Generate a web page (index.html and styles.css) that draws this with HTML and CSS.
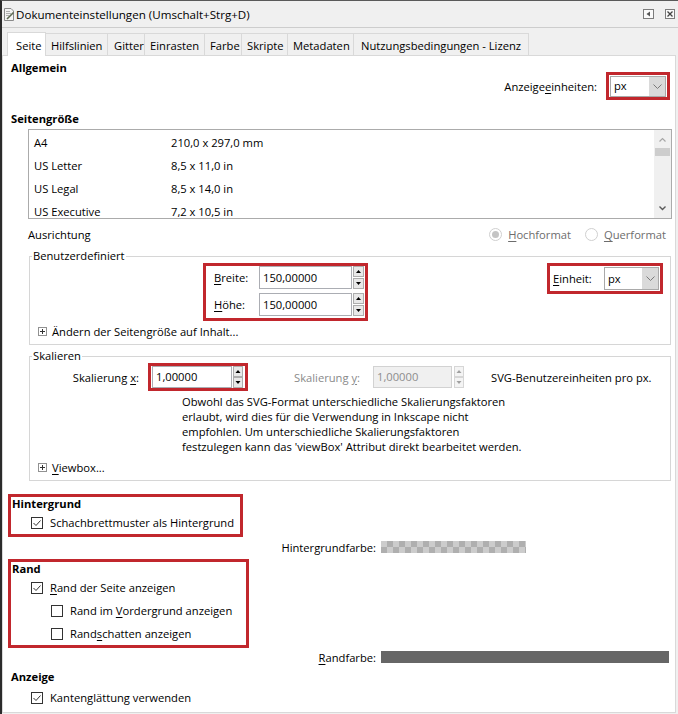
FILE: index.html
```html
<!DOCTYPE html>
<html lang="de">
<head>
    <meta charset="UTF-8">
    <title>Dokumenteinstellungen</title>
    <link rel="stylesheet" href="styles.css">
</head>
<body>
<div class="window">
    <!-- Title bar -->
    <div class="titlebar">
        <svg class="app-icon" width="12" height="13" viewBox="0 0 12 13">
            <path d="M1.5 0.5 H8 L10.5 3 V12.5 H1.5 Z" fill="#f4f4f4" stroke="#8a8a8a"/>
            <path d="M3 3.5 H7 M3 5.5 H8 M3 7.5 H6" stroke="#b0b0b0"/>
            <path d="M4 11 L10.5 4.5" stroke="#5d6b52" stroke-width="1.6"/>
        </svg>
        <span class="title">Dokumenteinstellungen (Umschalt+Strg+D)</span>
        <span class="title-btns">
            <svg width="11" height="10" viewBox="0 0 11 10">
                <rect x="0.5" y="0.5" width="10" height="9" fill="#fafafa" stroke="#7c7c7c"/>
                <path d="M3.5 5 L7 2.5 V7.5 Z" fill="#555"/>
            </svg>
            <svg width="10" height="10" viewBox="0 0 10 10">
                <rect x="0.5" y="0.5" width="9" height="9" fill="#fafafa" stroke="#7c7c7c"/>
                <path d="M2.5 2.5 L7.5 7.5 M7.5 2.5 L2.5 7.5" stroke="#444" stroke-width="1.3"/>
            </svg>
        </span>
    </div>

    <!-- Tabs -->
    <div class="tabs">
        <div class="tab active tab-seite">Seite</div>
        <div class="tab tab-hilfs">Hilfslinien</div>
        <div class="tab tab-gitter">Gitter</div>
        <div class="tab tab-einrasten">Einrasten</div>
        <div class="tab tab-farbe">Farbe</div>
        <div class="tab tab-skripte">Skripte</div>
        <div class="tab tab-meta">Metadaten</div>
        <div class="tab tab-lizenz">Nutzungsbedingungen - Lizenz</div>
    </div>

    <div class="panel">
        <!-- Allgemein -->
        <div class="general">
            <div class="heading">Allgemein</div>
            <div class="units">
                <label>Anzeige<u>e</u>inheiten:</label>
                <div class="hl units-box">
                    <div class="select">
                        <span class="val">px</span>
                        <span class="arrow">
                            <svg width="9" height="6" viewBox="0 0 9 6"><path d="M0.5 0.5 L4.5 4.5 L8.5 0.5" fill="none" stroke="#7a7a7a"/></svg>
                        </span>
                    </div>
                </div>
            </div>
        </div>

        <!-- Seitengröße -->
        <div class="heading heading-size">Seitengröße</div>
        <div class="sizes">
            <div class="rows">
                <div class="size-row"><span class="name">A4</span><span>210,0 x 297,0 mm</span></div>
                <div class="size-row"><span class="name">US Letter</span><span>8,5 x 11,0 in</span></div>
                <div class="size-row"><span class="name">US Legal</span><span>8,5 x 14,0 in</span></div>
                <div class="size-row"><span class="name">US Executive</span><span>7,2 x 10,5 in</span></div>
            </div>
            <svg class="scrollbar" width="17" height="88" viewBox="0 0 17 88">
                <rect width="17" height="88" fill="#f0f0f0"/>
                <path d="M5.5 11.5 L8.5 8.5 L11.5 11.5" fill="none" stroke="#a6a6a6" stroke-width="1.2"/>
                <rect x="1" y="18" width="15" height="8" fill="#cdcdcd"/>
                <path d="M5.5 76.5 L8.5 79.5 L11.5 76.5" fill="none" stroke="#5a5a5a" stroke-width="1.4"/>
            </svg>
        </div>

        <div class="orient">
            <span>Ausrichtung</span>
            <span class="radios">
                <span class="radio">
                    <svg width="13" height="13" viewBox="0 0 13 13">
                        <circle cx="6.5" cy="6.5" r="6" fill="#fff" stroke="#cfcfcf"/>
                        <circle cx="6.5" cy="6.5" r="3.5" fill="#c4c4c4"/>
                    </svg>
                    <span><u>H</u>ochformat</span>
                </span>
                <span class="radio">
                    <svg width="13" height="13" viewBox="0 0 13 13">
                        <circle cx="6.5" cy="6.5" r="6" fill="#fff" stroke="#cfcfcf"/>
                    </svg>
                    <span><u>Q</u>uerformat</span>
                </span>
            </span>
        </div>

        <!-- Benutzerdefiniert -->
        <fieldset class="group group-custom">
            <legend>Benutzerdefiniert</legend>
            <div class="dims">
                <div class="hl dims-box">
                    <div class="spin-row">
                        <label class="dim-label"><u>B</u>reite:</label>
                        <div class="input">150,00000</div>
                        <svg class="spinner" width="11" height="23" viewBox="0 0 11 23">
                            <rect x="0.5" y="0.5" width="10" height="10" fill="#e8e8e8" stroke="#adadad"/>
                            <rect x="0.5" y="12.5" width="10" height="10" fill="#e8e8e8" stroke="#adadad"/>
                            <path d="M3 7 H8 L5.5 4 Z" fill="#000"/>
                            <path d="M3 16 H8 L5.5 19 Z" fill="#000"/>
                        </svg>
                    </div>
                    <div class="spin-row">
                        <label class="dim-label"><u>H</u>öhe:</label>
                        <div class="input">150,00000</div>
                        <svg class="spinner" width="11" height="23" viewBox="0 0 11 23">
                            <rect x="0.5" y="0.5" width="10" height="10" fill="#e8e8e8" stroke="#adadad"/>
                            <rect x="0.5" y="12.5" width="10" height="10" fill="#e8e8e8" stroke="#adadad"/>
                            <path d="M3 7 H8 L5.5 4 Z" fill="#000"/>
                            <path d="M3 16 H8 L5.5 19 Z" fill="#000"/>
                        </svg>
                    </div>
                </div>
                <div class="hl unit-box">
                    <label class="unit-label"><u>E</u>inheit:</label>
                    <div class="select select-unit">
                        <span class="val">px</span>
                        <span class="arrow">
                            <svg width="9" height="6" viewBox="0 0 9 6"><path d="M0.5 0.5 L4.5 4.5 L8.5 0.5" fill="none" stroke="#7a7a7a"/></svg>
                        </span>
                    </div>
                </div>
            </div>
            <div class="expander">
                <svg width="9" height="9" viewBox="0 0 9 9">
                    <rect x="0.5" y="0.5" width="8" height="8" fill="#fff" stroke="#919191"/>
                    <path d="M2 4.5 H7 M4.5 2 V7" stroke="#333"/>
                </svg>
                <span>Ändern der Seitengröße auf Inhalt...</span>
            </div>
        </fieldset>

        <!-- Skalieren -->
        <fieldset class="group group-scale">
            <legend>Skalieren</legend>
            <div class="scale-row">
                <label class="lbl-x">Skalierung <u>x</u>:</label>
                <div class="hl scale-box">
                    <div class="input input-scale">1,00000</div>
                    <svg class="spinner" width="10" height="22" viewBox="0 0 10 22">
                        <rect x="0.5" y="0.5" width="9" height="10" fill="#e8e8e8" stroke="#adadad"/>
                        <rect x="0.5" y="11.5" width="9" height="10" fill="#e8e8e8" stroke="#adadad"/>
                        <path d="M2.5 7 H7.5 L5 4 Z" fill="#000"/>
                        <path d="M2.5 15 H7.5 L5 18 Z" fill="#000"/>
                    </svg>
                </div>
                <label class="lbl-y">Skalierung <u>y</u>:</label>
                <div class="input input-disabled">1,00000</div>
                <svg class="spinner spinner-y" width="10" height="22" viewBox="0 0 10 22">
                    <rect x="0.5" y="0.5" width="9" height="10" fill="#f4f4f4" stroke="#d6d6d6"/>
                    <rect x="0.5" y="11.5" width="9" height="10" fill="#f4f4f4" stroke="#d6d6d6"/>
                    <path d="M2.5 7 H7.5 L5 4 Z" fill="#a0a0a0"/>
                    <path d="M2.5 15 H7.5 L5 18 Z" fill="#a0a0a0"/>
                </svg>
                <span class="svg-units">SVG-Benutzereinheiten pro px.</span>
            </div>
            <p class="note">Obwohl das SVG-Format unterschiedliche Skalierungsfaktoren<br>erlaubt, wird dies für die Verwendung in Inkscape nicht<br>empfohlen. Um unterschiedliche Skalierungsfaktoren<br>festzulegen kann das 'viewBox' Attribut direkt bearbeitet werden.</p>
            <div class="expander">
                <svg width="9" height="9" viewBox="0 0 9 9">
                    <rect x="0.5" y="0.5" width="8" height="8" fill="#fff" stroke="#919191"/>
                    <path d="M2 4.5 H7 M4.5 2 V7" stroke="#333"/>
                </svg>
                <span><u>V</u>iewbox...</span>
            </div>
        </fieldset>

        <!-- Hintergrund -->
        <div class="hl box-bg">
            <div class="heading">Hintergrund</div>
            <div class="check-row">
                <svg class="check" width="12" height="12" viewBox="0 0 12 12">
                    <rect x="0.5" y="0.5" width="11" height="11" fill="#fff" stroke="#333"/>
                    <path d="M2.5 6 L5 8.5 L9.5 3.5" fill="none" stroke="#333"/>
                </svg>
                <span>Schachbrettmuster als Hintergrund</span>
            </div>
        </div>
        <div class="color-row">
            <span class="color-label">Hintergrundfarbe:</span>
            <span class="swatch swatch-checker"></span>
        </div>

        <!-- Rand -->
        <div class="hl box-border">
            <div class="heading">Rand</div>
            <div class="check-row">
                <svg class="check" width="12" height="12" viewBox="0 0 12 12">
                    <rect x="0.5" y="0.5" width="11" height="11" fill="#fff" stroke="#333"/>
                    <path d="M2.5 6 L5 8.5 L9.5 3.5" fill="none" stroke="#333"/>
                </svg>
                <span><u>R</u>and der Seite anzeigen</span>
            </div>
            <div class="check-row sub">
                <svg class="check" width="12" height="12" viewBox="0 0 12 12">
                    <rect x="0.5" y="0.5" width="11" height="11" fill="#fff" stroke="#333"/>
                </svg>
                <span>Rand im <u>V</u>ordergrund anzeigen</span>
            </div>
            <div class="check-row sub">
                <svg class="check" width="12" height="12" viewBox="0 0 12 12">
                    <rect x="0.5" y="0.5" width="11" height="11" fill="#fff" stroke="#333"/>
                </svg>
                <span>Rand<u>s</u>chatten anzeigen</span>
            </div>
        </div>
        <div class="color-row color-row-border">
            <span class="color-label"><u>R</u>andfarbe:</span>
            <span class="swatch swatch-grey"></span>
        </div>

        <!-- Anzeige -->
        <div class="heading heading-display">Anzeige</div>
        <div class="check-row plain">
            <svg class="check" width="12" height="12" viewBox="0 0 12 12">
                <rect x="0.5" y="0.5" width="11" height="11" fill="#fff" stroke="#333"/>
                <path d="M2.5 6 L5 8.5 L9.5 3.5" fill="none" stroke="#333"/>
            </svg>
            <span>Kantenglättung verwenden</span>
        </div>
    </div>
</div>
</body>
</html>
```

FILE: styles.css
```css
* {
    box-sizing: border-box;
}
body {
    margin: 0;
    width: 678px;
    height: 714px;
    overflow: hidden;
    background: #e4e4e4;
    font-family: "Open Sans", "Noto Sans", sans-serif;
    font-size: 11.2px;
    color: #000;
}
u {
    text-decoration-thickness: 1px;
    text-underline-offset: 2px;
}
.window {
    height: 714px;
    border-top: 1px solid #5a5a5a;
    border-left: 2px solid #2b2b2b;
    background: #f0f0f0;
    display: flex;
    flex-direction: column;
}

/* title bar */
.titlebar {
    flex: none;
    height: 27px;
    border-bottom: 1px solid #cdcdcd;
    display: flex;
    align-items: center;
    padding: 1px 3px 0 1px;
    font-size: 11.6px;
}
.app-icon {
    margin-right: 1px;
}
.title-btns {
    margin-left: auto;
    display: flex;
    gap: 11px;
    margin-top: -2px;
}

/* tabs */
.tabs {
    flex: none;
    height: 27px;
    display: flex;
    align-items: flex-end;
    padding-left: 5px;
}
.tab {
    height: 22px;
    padding: 4px 0 0 5px;
    line-height: 15px;
    border: 1px solid #d9d9d9;
    border-bottom: none;
    margin-right: -1px;
    background: #f0f0f0;
    white-space: nowrap;
    overflow: hidden;
}
.tab.active {
    height: 24px;
    margin-bottom: -1px;
    padding: 5px 0 0 8px;
    background: #fff;
    position: relative;
    z-index: 1;
}
.tab-seite { width: 39px; }
.tab-hilfs { width: 63px; }
.tab-gitter { width: 38px; padding-left: 6px; }
.tab-einrasten { width: 61px; }
.tab-farbe { width: 38px; }
.tab-skripte { width: 47px; }
.tab-meta { width: 67px; }
.tab-lizenz { width: 176px; padding-left: 7px; }

/* page panel */
.panel {
    flex: none;
    height: 658px;
    margin-right: 2px;
    border: 1px solid #d9d9d9;
    background: #fff;
    padding: 5px 3px 0 8px;
    overflow: hidden;
}
.heading {
    font-weight: bold;
    line-height: 14px;
}
.general {
    display: flex;
    justify-content: space-between;
    align-items: flex-start;
}
.units {
    display: flex;
    align-items: center;
    margin-top: 11px;
    margin-right: 2px;
}
.units label {
    margin-right: 9px;
}
.hl {
    border: 3px solid #c1272d;
}
.units-box {
    padding: 1px 1px 0 1px;
}
.select {
    display: flex;
    width: 56px;
    height: 21px;
    border: 1px solid #a9a9a9;
    background: #fff;
}
.select .val {
    flex: 1;
    padding-left: 3px;
    line-height: 18px;
}
.select .arrow {
    width: 16px;
    background: #dadada;
    display: flex;
    align-items: center;
    justify-content: center;
}

/* page sizes */
.heading-size {
    margin-top: 12px;
}
.sizes {
    margin: 3px 0 0 17px;
    height: 90px;
    border: 1px solid #ababab;
    display: flex;
    overflow: hidden;
}
.sizes .rows {
    flex: 1;
    padding-top: 1px;
}
.size-row {
    height: 23px;
    line-height: 23px;
    padding-left: 5px;
    display: flex;
}
.size-row .name {
    width: 137px;
}
.scrollbar {
    flex: none;
}
.orient {
    margin: 7px 0 0 17px;
    height: 16px;
    padding-right: 6px;
    display: flex;
    justify-content: space-between;
    align-items: center;
}
.radios {
    display: flex;
    gap: 14px;
    color: #6d6d6d;
}
.radio {
    display: flex;
    align-items: center;
    gap: 6px;
}

/* frames */
.group {
    margin: 7px 1px 0 18px;
    padding: 0 0 5px 0;
    border: 1px solid #d6d6d6;
    min-width: 0;
}
.group legend {
    padding: 0 1px;
    margin-left: 2px;
    line-height: 14px;
}
.group-scale {
    margin-top: 4px;
}
.dims {
    display: flex;
    justify-content: space-between;
    align-items: flex-start;
    padding: 0 7px 0 173px;
}
.dims-box {
    padding: 0 1px 2px 8px;
}
.spin-row {
    display: flex;
    align-items: center;
    height: 23px;
}
.spin-row + .spin-row {
    margin-top: 4px;
}
.dim-label {
    width: 45px;
}
.input {
    width: 93px;
    height: 23px;
    border: 1px solid #abadb3;
    padding-left: 3px;
    line-height: 21px;
    background: #fff;
}
.spinner {
    margin-left: 1px;
    flex: none;
}
.unit-box {
    display: flex;
    align-items: center;
    height: 31px;
    padding: 0 1px 0 3px;
}
.unit-label {
    width: 51px;
}
.select-unit {
    width: 55px;
    height: 23px;
}
.select-unit .val {
    line-height: 21px;
}
.expander {
    display: flex;
    align-items: center;
    gap: 5px;
    height: 16px;
    margin-top: 2px;
    padding-left: 8px;
}
.scale-row {
    display: flex;
    align-items: center;
    height: 28px;
}
.lbl-x {
    width: 118px;
    text-align: right;
    padding-right: 9px;
}
.scale-box {
    display: flex;
    align-items: center;
    padding: 0 2px 0 1px;
}
.input-scale {
    width: 80px;
    height: 22px;
    line-height: 20px;
}
.lbl-y {
    width: 125px;
    text-align: right;
    padding-right: 13px;
    color: #8a8a8a;
}
.input-disabled {
    width: 79px;
    height: 22px;
    line-height: 20px;
    background: #f0f0f0;
    border-color: #d2d2d2;
    color: #8d8d8d;
}
.spinner-y {
    margin-left: 2px;
}
.svg-units {
    margin-left: 27px;
}
.note {
    margin: 3px 0 0 0;
    padding-left: 152px;
    line-height: 15px;
}
.group-scale .expander {
    margin-top: 5px;
}

/* background / border */
.box-bg {
    margin: 13px 0 0 -3px;
    width: 235px;
    padding-left: 1px;
}
.check-row {
    display: flex;
    align-items: center;
    gap: 7px;
    height: 23px;
    padding-left: 19px;
}
.check-row.sub {
    padding-left: 39px;
}
.check-row.plain {
    padding-left: 20px;
    margin-top: 2px;
}
.check {
    flex: none;
}
.color-row {
    display: flex;
    align-items: center;
    height: 16px;
    margin-top: 2px;
}
.color-label {
    width: 365px;
    text-align: right;
}
.swatch {
    margin-left: 5px;
    height: 12px;
}
.swatch-checker {
    width: 145px;
    background-color: #cccccc;
    background-image:
        linear-gradient(45deg, #afafaf 25%, transparent 25%, transparent 75%, #afafaf 75%),
        linear-gradient(45deg, #afafaf 25%, transparent 25%, transparent 75%, #afafaf 75%);
    background-size: 12px 12px;
    background-position: 0 0, 6px 6px;
}
.box-border {
    margin: 4px 0 0 -3px;
    width: 241px;
    padding-left: 1px;
}
.color-row-border {
    margin-top: 1px;
}
.swatch-grey {
    width: 288px;
    background: #666;
}
.heading-display {
    margin-top: 5px;
}
```
